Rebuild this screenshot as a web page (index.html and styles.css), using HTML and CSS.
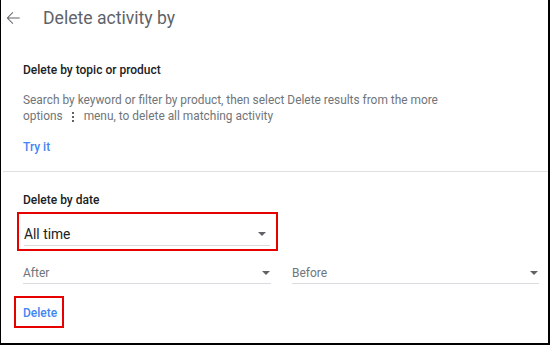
FILE: index.html
```html
<!DOCTYPE html>
<html>
<head>
<meta charset="utf-8">
<link rel="stylesheet" href="styles.css">
</head>
<body>
<div class="frame">
  <header class="topbar">
    <svg class="back" width="20" height="20" viewBox="0 0 24 24"><path d="M20 11.3H6.6l5.7-5.7-.8-.8L4.4 12l7.1 7.2.8-.8-5.7-5.7H20z" fill="#5f6368"/></svg>
    <h1 class="title">Delete activity by</h1>
  </header>
  <section class="section topic">
    <h2 class="heading">Delete by topic or product</h2>
    <p class="desc">Search by keyword or filter by product, then select Delete results from the more<br>options <span class="dots"><i></i><i></i><i></i></span> menu, to delete all matching activity</p>
    <a class="link try">Try it</a>
  </section>
  <div class="divider"></div>
  <section class="section date">
    <h2 class="heading">Delete by date</h2>
    <div class="highlight main-select">
      <div class="select big">
        <span>All time</span>
        <span class="caret"></span>
      </div>
    </div>
    <div class="range">
      <div class="select small"><span>After</span><span class="caret"></span></div>
      <div class="select small"><span>Before</span><span class="caret"></span></div>
    </div>
    <div class="highlight del-box"><a class="link del">Delete</a></div>
  </section>
</div>
</body>
</html>
```
FILE: styles.css
```css
html, body { margin: 0; padding: 0; background: #fff; }
body { font-family: Roboto, "Noto Sans", Arial, sans-serif; }
.frame {
  width: 550px;
  height: 345px;
  box-sizing: border-box;
  border-left: 1px solid #000;
  border-right: 2px solid #000;
  border-bottom: 2px solid #000;
  background: #fff;
  overflow: hidden;
}
.topbar {
  display: flex;
  align-items: center;
  height: 36px;
  padding-left: 2px;
}
.back { margin-right: 20px; }
.title {
  margin: 0;
  font-size: 17.6px;
  font-weight: 400;
  color: #5f6368;
}
.section { padding: 0 22px; }
.topic { padding-top: 26px; padding-bottom: 16px; }
.heading {
  margin: 0;
  font-size: 12px;
  font-weight: 500;
  color: #202124;
  line-height: 16px;
}
.desc {
  margin: 14px 0 0;
  font-size: 11.9px;
  line-height: 16px;
  color: #70757a;
}
.dots {
  display: inline-flex;
  flex-direction: column;
  gap: 2px;
  vertical-align: middle;
  margin: 0 7px 0 6px;
}
.dots i { width: 2px; height: 2px; background: #5f6368; display: block; }
.link {
  display: inline-block;
  color: #4285f4;
  font-weight: 500;
  font-size: 12px;
  line-height: 16px;
}
.try { margin-top: 15px; }
.divider { height: 1px; background: #e0e0e0; margin: 0 0 0 2px; }
.date { padding-top: 20px; padding-right: 9px; }
.highlight { border: 2px solid #e60000; box-sizing: border-box; }
.main-select {
  width: 261px;
  margin: 4px 0 0 -6px;
  padding: 8px 6px 3px 5px;
}
.select {
  display: flex;
  justify-content: space-between;
  align-items: center;
  border-bottom: 1px solid #dadce0;
}
.select.big { font-size: 13.8px; color: #202124; height: 23px; padding-right: 4px; }
.caret {
  width: 0; height: 0;
  border-left: 4px solid transparent;
  border-right: 4px solid transparent;
  border-top: 4px solid #5f6368;
}
.range { display: flex; gap: 21px; margin-top: 12px; }
.select.small { font-size: 12px; color: #70757a; height: 20px; padding-right: 1px; }
.range .select:first-child { width: 247px; }
.range .select:last-child { flex: 1; }
.del-box {
  width: 50px;
  margin: 12px 0 0 -9px;
  padding: 4px 0 5px 7px;
}
```
